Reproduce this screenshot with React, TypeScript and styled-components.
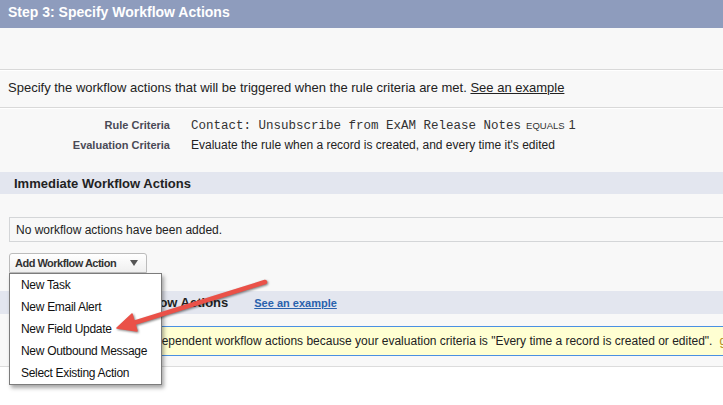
import React from "react";
import styled, { createGlobalStyle } from "styled-components";

const Global = createGlobalStyle`
  html, body { margin: 0; padding: 0; background: #ffffff; }
  body { font-family: "Liberation Sans", Arial, Helvetica, sans-serif; color: #222; }
  #root { width: 723px; overflow: hidden; }
`;

const Page = styled.div`
  position: relative;
  width: 723px;
  height: 405px;
  overflow: hidden;
  background: #ffffff;
`;

const Panel = styled.div`
  background: #f8f8f8;
  border-bottom: 1px solid #dcdcdc;
`;

const Header = styled.div`
  height: 28px;
  background: #8e9cbd;
  color: #ffffff;
  font-weight: bold;
  font-size: 14px;
  line-height: 25px;
  padding-left: 8px;
  box-sizing: border-box;
`;

const Blank = styled.div`
  height: 41px;
  border-bottom: 1px solid #d9d9d9;
`;

const Intro = styled.div`
  border-top: 1px solid #ffffff;
  border-bottom: 1px solid #d9d9d9;
  padding: 9px 8px 11px;
  font-size: 13px;
  line-height: 16px;
  color: #222;
`;

const PlainLink = styled.a`
  color: #222;
  text-decoration: underline;
`;

const Criteria = styled.div`
  border-top: 1px solid #ffffff;
  padding: 6px 0 17px;
  display: grid;
  grid-template-columns: 170px 1fr;
  column-gap: 21px;
  grid-auto-rows: 20px;
  align-items: center;
`;

const Label = styled.div`
  text-align: right;
  font-size: 11px;
  font-weight: bold;
  color: #4a4a56;
`;

const Value = styled.div`
  font-size: 12px;
  color: #222;
  white-space: nowrap;
`;

const Mono = styled.span`
  font-family: "Liberation Mono", "Courier New", monospace;
  font-size: 12.5px;
  color: #333;
`;

const Operator = styled.span`
  font-size: 9.5px;
  color: #333;
  margin-left: 5px;
`;

const Operand = styled.span`
  font-size: 13px;
  color: #333;
  margin-left: 4px;
`;

const Band = styled.div<{ $h: number }>`
  height: ${(p) => p.$h}px;
  background: #e3e6ef;
  display: flex;
  align-items: center;
  padding-left: 14px;
  font-size: 13px;
  font-weight: bold;
  color: #222;
  white-space: nowrap;
`;

const BandLink = styled.a`
  margin-left: 26px;
  font-size: 11px;
  font-weight: bold;
  color: #2a62ad;
  text-decoration: underline;
`;

const Section = styled.div`
  padding: 23px 0 0 9px;
`;

const EmptyBox = styled.div`
  height: 23px;
  margin-right: -10px;
  border: 1px solid #d4d6d8;
  background: #f8f8f8;
  padding-left: 6px;
  display: flex;
  align-items: center;
  font-size: 12px;
  color: #222;
`;

const MenuWrap = styled.div`
  position: relative;
  margin-top: 11px;
  width: 138px;
  height: 20px;
`;

const Button = styled.button`
  width: 138px;
  height: 20px;
  box-sizing: border-box;
  border: 1px solid #bcbcbc;
  border-radius: 3px 3px 0 0;
  background: linear-gradient(#ffffff, #efefef);
  padding: 0 0 0 5px;
  display: flex;
  align-items: center;
  justify-content: space-between;
  font-family: "Liberation Sans", Arial, sans-serif;
  font-size: 11px;
  font-weight: bold;
  letter-spacing: -0.5px;
  color: #333;
  cursor: pointer;
`;

const Caret = styled.span`
  width: 0;
  height: 0;
  margin-right: 8px;
  border-left: 4px solid transparent;
  border-right: 4px solid transparent;
  border-top: 6px solid #555;
`;

const Menu = styled.ul`
  position: absolute;
  top: 20px;
  left: 0;
  z-index: 2;
  margin: 0;
  padding: 0;
  list-style: none;
  width: 153px;
  box-sizing: border-box;
  background: #ffffff;
  border: 1px solid #7c7c7c;
  box-shadow: 2px 3px 4px rgba(0, 0, 0, 0.35);
`;

const MenuItem = styled.li`
  height: 22px;
  line-height: 22px;
  padding-left: 11px;
  font-size: 12px;
  letter-spacing: -0.3px;
  color: #111;
  white-space: nowrap;
`;

const Gap = styled.div<{ $h: number }>`
  height: ${(p) => p.$h}px;
`;

const Notice = styled.div`
  margin-left: 9px;
  margin-right: -40px;
  height: 28px;
  border-top: 1px solid #4a90e2;
  border-bottom: 1px solid #4a90e2;
  border-left: 1px solid #4a90e2;
  background: #ffffd2;
  display: flex;
  align-items: center;
  padding-left: 32px;
  font-size: 12px;
  color: #222;
  white-space: nowrap;
`;

const NoticeLink = styled.a`
  margin-left: 7px;
  color: #b08a20;
  text-decoration: underline;
`;

const Annotation = styled.svg`
  position: absolute;
  left: 100px;
  top: 270px;
  z-index: 3;
  overflow: visible;
  filter: drop-shadow(1px 1.5px 1.2px rgba(0, 0, 0, 0.5));
`;

export default function App() {
  const items = [
    "New Task",
    "New Email Alert",
    "New Field Update",
    "New Outbound Message",
    "Select Existing Action",
  ];
  return (
    <>
      <Global />
      <Page>
        <Panel>
          <Header>Step 3: Specify Workflow Actions</Header>
          <Blank />
          <Intro>
            Specify the workflow actions that will be triggered when the rule criteria are met.{" "}
            <PlainLink href="#">See an example</PlainLink>
          </Intro>
          <Criteria>
            <Label>Rule Criteria</Label>
            <Value>
              <Mono>Contact: Unsubscribe from ExAM Release Notes</Mono>
              <Operator>EQUALS</Operator>
              <Operand>1</Operand>
            </Value>
            <Label>Evaluation Criteria</Label>
            <Value>Evaluate the rule when a record is created, and every time it's edited</Value>
          </Criteria>
          <Band $h={22}>Immediate Workflow Actions</Band>
          <Section>
            <EmptyBox>No workflow actions have been added.</EmptyBox>
            <MenuWrap>
              <Button>
                Add Workflow Action
                <Caret />
              </Button>
              <Menu>
                {items.map((t) => (
                  <MenuItem key={t}>{t}</MenuItem>
                ))}
              </Menu>
            </MenuWrap>
          </Section>
          <Gap $h={18} />
          <Band $h={23}>
            Time-Dependent Workflow Actions
            <BandLink href="#">See an example</BandLink>
          </Band>
          <Gap $h={12} />
          <Notice>
            You cannot add time-dependent workflow actions because your evaluation criteria is
            "Every time a record is created or edited".
            <NoticeLink href="#">go back</NoticeLink>
          </Notice>
          <Gap $h={10} />
        </Panel>
        <Annotation width="180" height="75" viewBox="0 0 180 75">
          <line x1="165" y1="12" x2="32" y2="53.5" stroke="#ea5148" strokeWidth="4.5" strokeLinecap="round" />
          <polygon
            points="17,58 37,61 32,44"
            fill="#ea5148"
            stroke="#ea5148"
            strokeWidth="1.5"
            strokeLinejoin="round"
          />
        </Annotation>
      </Page>
    </>
  );
}
